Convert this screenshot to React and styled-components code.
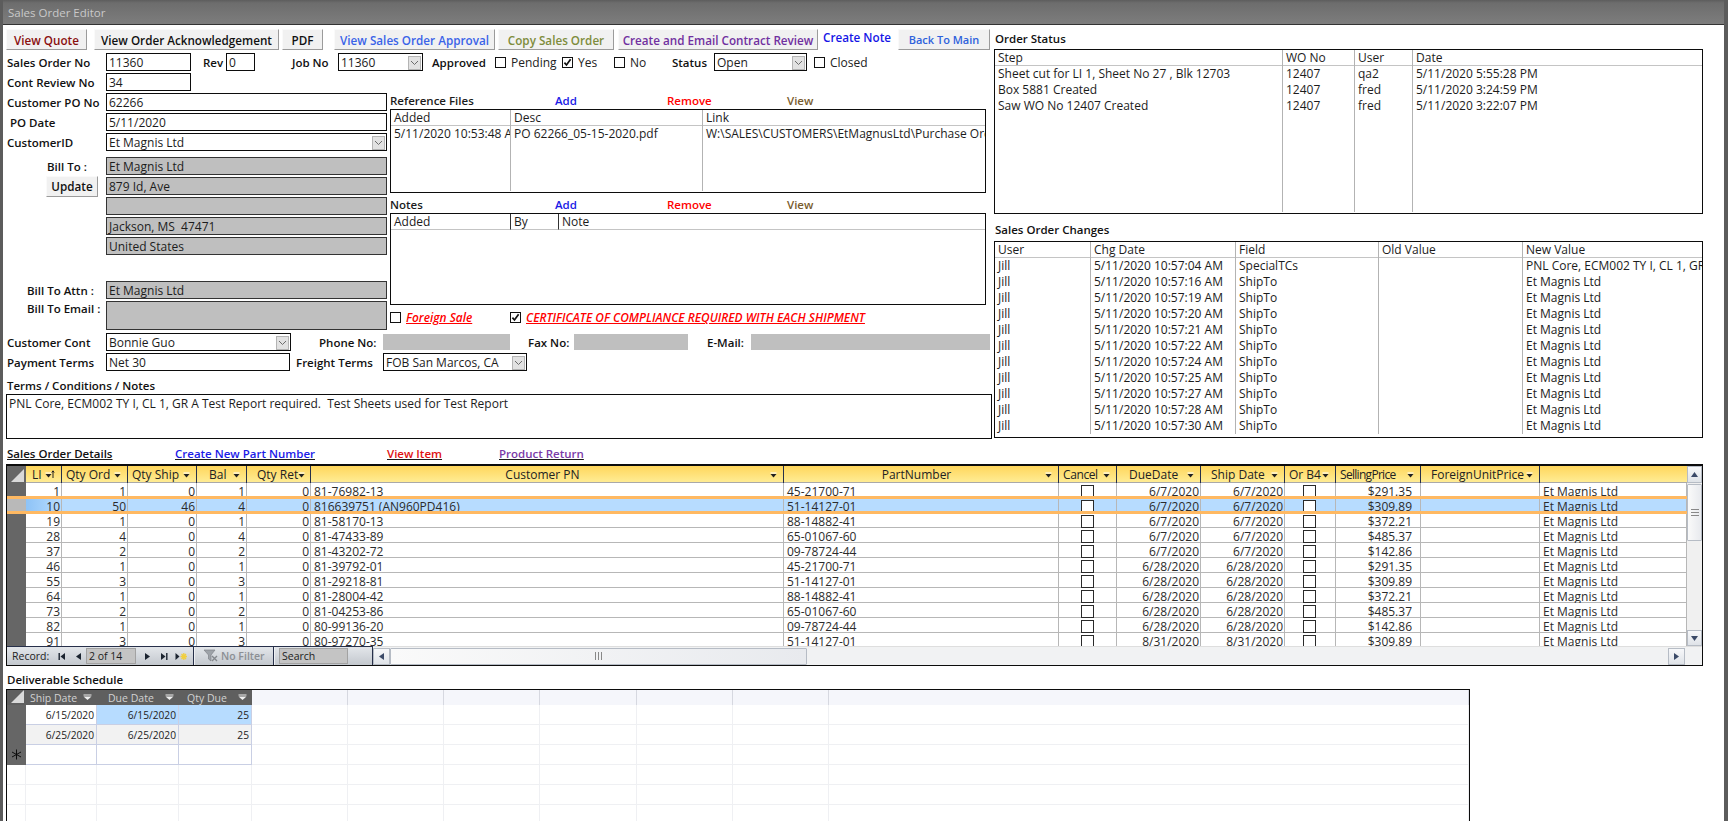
import React from "react";
import styled, { createGlobalStyle } from "styled-components";

const GlobalStyle = createGlobalStyle`
  html, body {
    margin: 0;
    padding: 0;
    background: #fff;
  }
  body {
    font-family: "Open Sans", "Noto Sans", "Liberation Sans", sans-serif;
    font-size: 12px;
    color: #1c1c1c;
  }
  * {
    box-sizing: border-box;
  }
`;

const Page = styled.div`
  width: 1728px;
  height: 821px;
  overflow: hidden;
  display: flex;
  flex-direction: column;
  background: #fff;
  border-left: 3px solid #5c5c5c;
  border-right: 4px solid #5c5c5c;
`;

const TitleBar = styled.div`
  height: 25px;
  flex: none;
  margin: 0 -4px 0 -3px;
  padding: 0 0 0 8px;
  display: flex;
  align-items: center;
  background: linear-gradient(#5d5d5d 0, #6d6d6d 3px, #7d7d7d 100%);
  border-bottom: 1px solid #333;
  color: #c9c9c9;
  font-size: 11.5px;
`;

const Body = styled.div`
  flex: 1;
  min-height: 0;
  padding: 4px 0 0 3px;
  display: flex;
  flex-direction: column;
`;

const TopArea = styled.div`
  display: flex;
  gap: 2px;
  height: 417px;
  flex: none;
`;

const LeftPane = styled.div`
  width: 986px;
  flex: none;
  display: flex;
  flex-direction: column;
`;

const RightPane = styled.div`
  width: 709px;
  flex: none;
  display: flex;
  flex-direction: column;
`;

const Toolbar = styled.div`
  display: flex;
  height: 21px;
  margin-bottom: 3px;
`;

const ActionButton = styled.div`
  width: ${(p) => p.$w}px;
  margin-left: ${(p) => p.$ml || 0}px;
  height: 21px;
  display: flex;
  align-items: center;
  justify-content: center;
  background: #f1f1f1;
  border-right: 1px solid #9b9b9b;
  border-bottom: 1px solid #9b9b9b;
  border-top: 1px solid #fafafa;
  border-left: 1px solid #fafafa;
  color: ${(p) => p.$color || "#111"};
  font-weight: 600;
  font-size: ${(p) => p.$size || 11.7}px;
  white-space: nowrap;
`;

const NoteLink = styled.div`
  width: 75px;
  margin-left: 5px;
  padding-bottom: 5px;
  display: flex;
  align-items: center;
  color: #1616e6;
  font-weight: 600;
  font-size: 11.7px;
  white-space: nowrap;
`;

const Row = styled.div`
  display: flex;
  align-items: center;
  height: 18px;
  margin-bottom: ${(p) => p.$mb ?? 2}px;
  margin-top: ${(p) => p.$mt || 0}px;
`;

const TallRow = styled(Row)`
  height: 29px;
  align-items: flex-start;
`;

const Label = styled.div`
  width: ${(p) => p.$w}px;
  margin-left: ${(p) => p.$ml || 0}px;
  padding-left: ${(p) => p.$pl ?? 1}px;
  flex: none;
  color: #111;
  font-weight: 600;
  font-size: 11.5px;
  white-space: nowrap;
`;

const TextBox = styled.div`
  width: ${(p) => p.$w}px;
  height: ${(p) => p.$h || 18}px;
  flex: none;
  padding: 1px 0 0 2px;
  line-height: 15px;
  background: ${(p) => (p.$gray ? "#bfbfbf" : "#fff")};
  border: 1px solid ${(p) => (p.$gray ? "#333" : "#0c0c0c")};
  white-space: nowrap;
  overflow: hidden;
`;

const BlankField = styled.div`
  width: ${(p) => p.$w}px;
  height: 16px;
  flex: none;
  background: #bfbfbf;
`;

const ComboFrame = styled(TextBox)`
  display: flex;
  justify-content: space-between;
  padding-right: 1px;
`;

const ComboArrow = styled.span`
  width: 13px;
  height: 14px;
  margin-top: 1px;
  flex: none;
  display: flex;
  align-items: center;
  justify-content: center;
  background: #e2e2e2;
  border: 1px solid #b4b4b4;
`;

const CheckOption = styled.div`
  width: ${(p) => p.$w}px;
  margin-left: ${(p) => p.$ml || 0}px;
  flex: none;
  display: flex;
  align-items: center;
  gap: 5px;
  color: #222;
  white-space: nowrap;
`;

const Tick = styled.span`
  width: 11px;
  height: 11px;
  flex: none;
  display: flex;
  background: #fff;
  border: 1px solid #111;
`;

const Columns = styled.div`
  display: flex;
  gap: 3px;
  height: 260px;
`;

const FormCol = styled.div`
  width: 381px;
  flex: none;
`;

const FilesCol = styled.div`
  width: 596px;
  flex: none;
  padding-top: 20px;
`;

const BillSpacer = styled.div`
  height: 4px;
`;

const UpdateButton = styled(ActionButton)`
  margin: 0 8px 0 40px;
  flex: none;
`;

const ListHeading = styled.div`
  display: grid;
  grid-template-columns: 165px 112px 120px 1fr;
  height: 16px;
  line-height: 16px;
  font-weight: 600;
  font-size: 11.5px;
`;

const ListLink = styled.span`
  color: ${(p) => p.$color};
`;

const ListBox = styled.div`
  display: grid;
  grid-template-columns: ${(p) => p.$cols};
  height: ${(p) => p.$h}px;
  margin-bottom: ${(p) => p.$mb || 0}px;
  border: 1px solid #0c0c0c;
  overflow: hidden;
`;

const ListColumn = styled.div`
  min-width: 0;
  display: flex;
  flex-direction: column;
  margin-bottom: 1px;
  border-right: ${(p) => (p.$last || !p.$lines ? "none" : "1px solid #b3b3b3")};
`;

const ListHead = styled.div`
  height: 16px;
  flex: none;
  padding-left: 3px;
  line-height: 15px;
  border-bottom: 1px solid #c4c4c4;
  border-right: ${(p) => (p.$dark ? "1px solid #333" : "none")};
  white-space: nowrap;
`;

const ListCell = styled.div`
  height: 16px;
  flex: none;
  padding-left: 3px;
  line-height: 16px;
  white-space: nowrap;
  overflow: hidden;
`;

const ListScroll = styled.div`
  width: 15px;
  margin-left: -15px;
  display: flex;
  flex-direction: column;
  align-items: center;
  justify-content: space-between;
  background: #f0f0f0;
  z-index: 1;
`;

const ListThumb = styled.div`
  width: 15px;
  height: 17px;
  margin-top: 1px;
  background: #cdcdcd;
`;

const ScrollCap = styled.div`
  height: 16px;
  display: flex;
  align-items: center;
  justify-content: center;
`;

const WarnRow = styled.div`
  display: flex;
  align-items: center;
  height: 16px;
  margin-top: 4px;
`;

const WarnText = styled.span`
  color: #f00;
  font-weight: 600;
  font-size: 11.9px;
  font-style: italic;
  text-decoration: underline;
`;

const SectionLabel = styled.div`
  height: ${(p) => p.$h || 16}px;
  margin-top: ${(p) => p.$mt || 0}px;
  margin-bottom: ${(p) => p.$mb || 0}px;
  line-height: ${(p) => p.$h || 16}px;
  padding-left: 1px;
  color: #111;
  font-weight: 600;
  font-size: 11.5px;
  white-space: nowrap;
`;

const LinkBar = styled.div`
  display: grid;
  grid-template-columns: 169px 212px 112px 1fr;
  height: 16px;
  margin-bottom: 2px;
  line-height: 16px;
  font-weight: 600;
  font-size: 11.5px;
  text-decoration: underline;
`;

const DetailGrid = styled.div`
  width: 1697px;
  height: 202px;
  flex: none;
  display: flex;
  flex-direction: column;
  border: 1px solid #0c0c0c;
  border-top-width: 2px;
`;

const GridMain = styled.div`
  flex: 1;
  min-height: 0;
  display: flex;
`;

const GridRows = styled.div`
  flex: 1;
  min-width: 0;
  overflow: hidden;
`;

const detailColumns = "19px 36px 66px 69px 50px 64px 473px 275px 58px 84px 84px 51px 85px 119px 1fr";

const HeadRow = styled.div`
  display: grid;
  grid-template-columns: ${detailColumns};
  height: 17px;
  border-bottom: 1px solid #a9a9a9;
  background: linear-gradient(#ffd65c, #ffec94);
`;

const CornerCell = styled.div`
  background: ${(p) => p.$bg || "#666"};
  display: flex;
  align-items: flex-end;
  justify-content: flex-end;
  padding: 0 2px 2px 0;
`;

const HeadCell = styled.div`
  min-width: 0;
  display: flex;
  align-items: center;
  padding: 0 6px 1px 4px;
  border-right: 1px solid ${(p) => (p.$last ? "transparent" : "#27304a")};
  color: #222;
  white-space: nowrap;
`;

const HeadText = styled.span`
  flex: 1;
  padding-left: ${(p) => p.$pl || 0}px;
  text-align: ${(p) => p.$align || "left"};
  letter-spacing: ${(p) => p.$tight || 0}px;
`;

const BodyRow = styled.div`
  position: relative;
  display: grid;
  grid-template-columns: ${detailColumns};
  height: 15px;
  border-bottom: 1px solid #b7b7b7;
  background: ${(p) => (p.$selected ? "#b7dcff" : "#fff")};
  &::before,
  &::after {
    content: "";
    display: ${(p) => (p.$selected ? "block" : "none")};
    position: absolute;
    left: 0;
    right: 0;
    height: 3px;
    background: #ffb962;
    z-index: 2;
  }
  &::before {
    top: -2px;
  }
  &::after {
    bottom: -2px;
  }
`;

const Selector = styled.div`
  background: ${(p) => (p.$selected ? "#b9b9b9" : "#666")};
  margin-bottom: -1px;
`;

const Cell = styled.div`
  min-width: 0;
  height: 15px;
  padding: 0 ${(p) => p.$pr ?? 1}px 0 ${(p) => p.$pl ?? 0}px;
  line-height: 18px;
  text-align: ${(p) => p.$align || "left"};
  border-right: 1px solid #b7b7b7;
  color: #2b2b2b;
  white-space: nowrap;
  background: ${(p) => (p.$active ? "linear-gradient(90deg, #8ec3f6, #b7dcff)" : "transparent")};
`;

const CheckCell = styled(Cell)`
  display: flex;
  justify-content: center;
  padding-top: 2px;
`;

const GridCheck = styled.span`
  width: 13px;
  height: 13px;
  background: #fff;
  border: 1px solid #2a2a2a;
`;

const VScroll = styled.div`
  width: 15px;
  flex: none;
  display: flex;
  flex-direction: column;
  background: #f0f0f0;
`;

const ScrollButton = styled.div`
  flex: none;
  width: ${(p) => p.$w || 15}px;
  height: ${(p) => p.$h || 15}px;
  display: flex;
  align-items: center;
  justify-content: center;
  background: linear-gradient(#f7f8fa, #dfe3e8);
  border: 1px solid #b6bcc5;
`;

const ScrollThumb = styled.div`
  flex: none;
  width: ${(p) => p.$w || 15}px;
  height: ${(p) => p.$h || 15}px;
  display: flex;
  align-items: center;
  justify-content: center;
  margin-top: ${(p) => p.$mt || 0}px;
  background: linear-gradient(90deg, #fafafa, #e8eaee);
  border: 1px solid #b6bcc5;
  border-radius: 1px;
`;

const ScrollGap = styled.div`
  flex: 1;
`;

const GripV = styled.span`
  width: 8px;
  height: 7px;
  border-top: 1px solid #888;
  border-bottom: 1px solid #888;
  background: linear-gradient(#888, #888) center / 100% 1px no-repeat;
`;

const GripH = styled.span`
  width: 7px;
  height: 8px;
  border-left: 1px solid #888;
  border-right: 1px solid #888;
  background: linear-gradient(#888, #888) center / 1px 100% no-repeat;
`;

const NavRow = styled.div`
  height: 19px;
  flex: none;
  display: flex;
`;

const NavBar = styled.div`
  width: 366px;
  flex: none;
  display: flex;
  align-items: center;
  padding-left: 5px;
  background: linear-gradient(#e3e6ea, #c3c8ce);
  border-top: 1px solid #27304a;
  border-right: 1px solid #27304a;
  color: #222;
  font-size: 10.5px;
`;

const NavLabel = styled.span`
  width: 46px;
  flex: none;
`;

const NavIcon = styled.span`
  margin-left: ${(p) => p.$ml || 0}px;
  display: flex;
  flex: none;
`;

const RecordBox = styled.div`
  width: ${(p) => p.$w}px;
  margin-left: ${(p) => p.$ml || 0}px;
  height: 16px;
  flex: none;
  padding-left: 2px;
  line-height: 14px;
  background: #c4c4c4;
  border: 1px solid #a2a2a2;
  color: #1c1c1c;
`;

const FilterText = styled.span`
  width: 42px;
  margin-left: 2px;
  flex: none;
  color: #8b8f94;
  font-weight: 600;
  white-space: nowrap;
`;

const NavDivider = styled.span`
  width: 1px;
  height: 18px;
  flex: none;
  margin-left: ${(p) => p.$ml || 0}px;
  background: #27304a;
  box-shadow: 1px 0 0 #eef0f3;
`;

const HScroll = styled.div`
  flex: 1;
  min-width: 0;
  display: flex;
  align-items: center;
  padding-right: 17px;
  background: #f1f2f3;
  border-top: 1px solid #dedede;
`;

const ScheduleSection = styled.div`
  flex: 1;
  min-height: 0;
  margin-top: 6px;
  display: flex;
  flex-direction: column;
`;

const Sheet = styled.div`
  width: 1464px;
  flex: 1;
  min-height: 0;
  margin-top: 1px;
  overflow: hidden;
  border-left: 1px solid #0c0c0c;
  border-right: 1px solid #0c0c0c;
  border-top: 1px solid #0c0c0c;
  display: grid;
  grid-template-columns: 19px 71px 82px 73px repeat(6, 96.15px) 1fr;
  grid-auto-rows: 20px;
  grid-template-rows: 15px;
`;

const SheetHead = styled.div`
  display: flex;
  align-items: center;
  padding: 0 4px 0 4px;
  background: #5f5f5f;
  color: #d2d2d2;
  font-size: 10.5px;
  white-space: nowrap;
`;

const SheetHeadBlank = styled.div`
  background: #f5f6fb;
  border-right: 1px solid #d6d8e0;
`;

const SheetCell = styled.div`
  padding-right: 2px;
  line-height: 20px;
  text-align: right;
  color: #222;
  font-size: 10.2px;
  background: ${(p) => p.$bg || "#fff"};
  border-right: 1px solid ${(p) => (p.$filled ? "#c9cfe4" : "#eff0f3")};
  border-bottom: 1px solid ${(p) => (p.$filled ? "#c9cfe4" : "#eff0f3")};
`;

const SheetSelector = styled.div`
  display: flex;
  align-items: center;
  justify-content: center;
  background: ${(p) => (p.$filled ? "#666" : "#fff")};
  border-right: 1px solid ${(p) => (p.$filled ? "#666" : "#eff0f3")};
  border-bottom: 1px solid ${(p) => (p.$filled ? "#666" : "#eff0f3")};
`;

// little drawings
const CheckMark = () => (
  <svg width="9" height="9" viewBox="0 0 9 9">
    <path d="M1.4 4.6 L3.5 7 L7.6 1.3" fill="none" stroke="#111" strokeWidth="1.7" />
  </svg>
);

const Chevron = () => (
  <svg width="9" height="6" viewBox="0 0 9 6">
    <path d="M1 1 L4.5 4.5 L8 1" fill="none" stroke="#6c6c6c" strokeWidth="1" />
  </svg>
);

const Caret = ({ up, color = "#666" }) => (
  <svg width="9" height="6" viewBox="0 0 9 6">
    <path d={up ? "M1 5 L4.5 1 L8 5" : "M1 1 L4.5 5 L8 1"} fill="none" stroke={color} strokeWidth="1.6" />
  </svg>
);

const Tri = ({ dir = "down", color = "#3b4a68", size = 9 }) => {
  const points = {
    down: "1,2 8,2 4.5,7",
    up: "1,7 8,7 4.5,2",
    left: "7,1 7,8 2,4.5",
    right: "2,1 2,8 7,4.5",
  };
  return (
    <svg width={size} height={size} viewBox="0 0 9 9">
      <polygon points={points[dir]} fill={color} />
    </svg>
  );
};

const SortArrow = ({ sorted }) => (
  <svg width={sorted ? 10 : 7} height="9" viewBox={sorted ? "0 0 10 9" : "0 0 7 9"} style={{ flex: "none" }}>
    <rect x="0.5" y="2.5" width="6" height="1" fill="#fff" />
    <polygon points="0.5,4 6.5,4 3.5,7.5" fill="#222" />
    {sorted && <path d="M8 8 V1 M6.8 2.5 L8 0.8 L9.2 2.5" stroke="#222" strokeWidth="1" fill="none" />}
  </svg>
);

const SheetArrow = () => (
  <svg width="10" height="7" viewBox="0 0 10 7" style={{ flex: "none" }}>
    <rect x="0.5" y="0.5" width="8" height="1" fill="#f0f0f0" />
    <polygon points="0.5,2.5 8.5,2.5 4.5,6" fill="#f0f0f0" />
  </svg>
);

const CornerMark = () => (
  <svg width="13" height="13" viewBox="0 0 13 13">
    <polygon points="13,0 13,13 0,13" fill="#d9d9d9" />
  </svg>
);

const FirstIcon = () => (
  <svg width="8" height="9" viewBox="0 0 8 9">
    <rect x="0.5" y="1" width="1.4" height="7" fill="#1b2430" />
    <polygon points="7,1 7,8 2.5,4.5" fill="#1b2430" />
  </svg>
);

const LastIcon = () => (
  <svg width="8" height="9" viewBox="0 0 8 9">
    <rect x="6.1" y="1" width="1.4" height="7" fill="#1b2430" />
    <polygon points="1,1 1,8 5.5,4.5" fill="#1b2430" />
  </svg>
);

const NewIcon = () => (
  <svg width="13" height="9" viewBox="0 0 13 9">
    <polygon points="0.5,1 0.5,8 4.5,4.5" fill="#1b2430" />
    <path d="M8.8 1 V8 M5.5 4.5 H12 M6.5 2 L11 7 M11 2 L6.5 7" stroke="#f1cf3f" strokeWidth="1.3" />
  </svg>
);

const FilterIcon = () => (
  <svg width="16" height="14" viewBox="0 0 16 14">
    <path d="M1 1 H12 L8 6 V12 L5.5 10 V6 Z" fill="#9ea3a9" stroke="#7f8388" strokeWidth="0.7" />
    <path d="M9 7 L14 12 M14 7 L9 12" stroke="#84888d" strokeWidth="1.4" />
  </svg>
);

const StarMark = () => (
  <svg width="11" height="11" viewBox="0 0 11 11">
    <path d="M5.5 0.5 V10.5 M1 3 L10 8 M10 3 L1 8" stroke="#0c0c0c" strokeWidth="1" />
  </svg>
);

const Combo = ({ w, value }) => (
  <ComboFrame $w={w}>
    {value}
    <ComboArrow>
      <Chevron />
    </ComboArrow>
  </ComboFrame>
);

const Check = ({ w, ml, children, checked }) => (
  <CheckOption $w={w} $ml={ml}>
    <Tick>{checked && <CheckMark />}</Tick>
    {children}
  </CheckOption>
);

const List = ({ cols, h, mb, columns, scroll }) => (
  <ListBox $cols={cols} $h={h} $mb={mb}>
    {columns.map((col, i) => (
      <ListColumn key={col.head} $lines={col.lines !== false} $last={i === columns.length - 1}>
        <ListHead $dark={col.dark}>{col.head}</ListHead>
        {(col.cells || []).map((text, j) => (
          <ListCell key={j}>{text}</ListCell>
        ))}
      </ListColumn>
    ))}
    {scroll && (
      <ListScroll>
        <div>
          <ScrollCap>
            <Caret up />
          </ScrollCap>
          <ListThumb />
        </div>
        <ScrollCap>
          <Caret />
        </ScrollCap>
      </ListScroll>
    )}
  </ListBox>
);

const orderStatus = [
  { head: "Step", cells: ["Sheet cut for LI 1, Sheet No 27 , Blk 12703", "Box 5881 Created", "Saw WO No 12407 Created"] },
  { head: "WO No", cells: ["12407", "12407", "12407"] },
  { head: "User", cells: ["qa2", "fred", "fred"] },
  { head: "Date", cells: ["5/11/2020 5:55:28 PM", "5/11/2020 3:24:59 PM", "5/11/2020 3:22:07 PM"] },
];

const changeTimes = ["04", "16", "19", "20", "21", "22", "24", "25", "27", "28", "30"];

const orderChanges = [
  { head: "User", cells: changeTimes.map(() => "Jill") },
  { head: "Chg Date", cells: changeTimes.map((s) => `5/11/2020 10:57:${s} AM`) },
  { head: "Field", cells: changeTimes.map((s, i) => (i === 0 ? "SpecialTCs" : "ShipTo")) },
  { head: "Old Value", cells: [] },
  {
    head: "New Value",
    cells: changeTimes.map((s, i) => (i === 0 ? "PNL Core, ECM002 TY I, CL 1, GR A Test" : "Et Magnis Ltd")),
  },
];

const referenceFiles = [
  { head: "Added", cells: ["5/11/2020 10:53:48 AM"] },
  { head: "Desc", cells: ["PO 62266_05-15-2020.pdf"] },
  { head: "Link", cells: ["W:\\SALES\\CUSTOMERS\\EtMagnusLtd\\Purchase Orders\\PO 62266"] },
];

const notes = [
  { head: "Added", lines: false, dark: true },
  { head: "By", lines: false, dark: true },
  { head: "Note", lines: false },
];

const detailHeads = [
  { label: "LI", sorted: true, pl: 2 },
  { label: "Qty Ord" },
  { label: "Qty Ship" },
  { label: "Bal", pl: 8 },
  { label: "Qty Ret", pl: 6 },
  { label: "Customer PN", align: "center" },
  { label: "PartNumber", align: "center" },
  { label: "Cancel", tight: -0.4 },
  { label: "DueDate", pl: 8 },
  { label: "Ship Date", pl: 6 },
  { label: "Or B4" },
  { label: "SellingPrice", tight: -0.7 },
  { label: "ForeignUnitPrice", pl: 6 },
];

const detailRows = [
  [1, 1, 0, 1, 0, "81-76982-13", "45-21700-71", "6/7/2020", "$291.35"],
  [10, 50, 46, 4, 0, "816639751 (AN960PD416)", "51-14127-01", "6/7/2020", "$309.89"],
  [19, 1, 0, 1, 0, "81-58170-13", "88-14882-41", "6/7/2020", "$372.21"],
  [28, 4, 0, 4, 0, "81-47433-89", "65-01067-60", "6/7/2020", "$485.37"],
  [37, 2, 0, 2, 0, "81-43202-72", "09-78724-44", "6/7/2020", "$142.86"],
  [46, 1, 0, 1, 0, "81-39792-01", "45-21700-71", "6/28/2020", "$291.35"],
  [55, 3, 0, 3, 0, "81-29218-81", "51-14127-01", "6/28/2020", "$309.89"],
  [64, 1, 0, 1, 0, "81-28004-42", "88-14882-41", "6/28/2020", "$372.21"],
  [73, 2, 0, 2, 0, "81-04253-86", "65-01067-60", "6/28/2020", "$485.37"],
  [82, 1, 0, 1, 0, "80-99136-20", "09-78724-44", "6/28/2020", "$142.86"],
  [91, 3, 0, 3, 0, "80-97270-35", "51-14127-01", "8/31/2020", "$309.89"],
];

const scheduleHeads = [
  { label: "Ship Date", pl: 0 },
  { label: "Due Date", pl: 7 },
  { label: "Qty Due", pl: 4 },
];

const scheduleRows = [
  { ship: "6/15/2020", due: "6/15/2020", qty: "25", bg: ["#fff", "#b7dcff", "#b7dcff"] },
  { ship: "6/25/2020", due: "6/25/2020", qty: "25", bg: ["#f2f2f2", "#f2f2f2", "#f2f2f2"] },
  { ship: "", due: "", qty: "", star: true, bg: ["#fff", "#fff", "#fff"] },
];

const DetailsGrid = () => (
  <DetailGrid>
    <GridMain>
      <GridRows>
        <HeadRow>
          <CornerCell>
            <CornerMark />
          </CornerCell>
          {detailHeads.map((h) => (
            <HeadCell key={h.label}>
              <HeadText $align={h.align} $pl={h.pl} $tight={h.tight}>
                {h.label}
              </HeadText>
              <SortArrow sorted={h.sorted} />
            </HeadCell>
          ))}
          <HeadCell $last />
        </HeadRow>
        {detailRows.map((r, i) => (
          <BodyRow key={r[0]} $selected={i === 1}>
            <Selector $selected={i === 1} />
            {r.slice(0, 5).map((v, j) => (
              <Cell key={j} $align="right" $active={i === 1 && j === 0}>
                {v}
              </Cell>
            ))}
            <Cell $pl={3}>{r[5]}</Cell>
            <Cell $pl={3}>{r[6]}</Cell>
            <CheckCell>
              <GridCheck />
            </CheckCell>
            <Cell $align="right">{r[7]}</Cell>
            <Cell $align="right">{r[7]}</Cell>
            <CheckCell>
              <GridCheck />
            </CheckCell>
            <Cell $align="right" $pr={8}>
              {r[8]}
            </Cell>
            <Cell />
            <Cell $pl={3}>Et Magnis Ltd</Cell>
          </BodyRow>
        ))}
      </GridRows>
      <VScroll>
        <ScrollButton $h={17}>
          <Tri dir="up" />
        </ScrollButton>
        <ScrollThumb $h={57} $mt={1}>
          <GripV />
        </ScrollThumb>
        <ScrollGap />
        <ScrollButton $h={16}>
          <Tri dir="down" />
        </ScrollButton>
      </VScroll>
    </GridMain>
    <NavRow>
      <NavBar>
        <NavLabel>Record:</NavLabel>
        <NavIcon>
          <FirstIcon />
        </NavIcon>
        <NavIcon $ml={8}>
          <Tri dir="left" color="#1b2430" />
        </NavIcon>
        <RecordBox $w={50} $ml={3}>
          2 of 14
        </RecordBox>
        <NavIcon $ml={7}>
          <Tri dir="right" color="#1b2430" />
        </NavIcon>
        <NavIcon $ml={8}>
          <LastIcon />
        </NavIcon>
        <NavIcon $ml={7}>
          <NewIcon />
        </NavIcon>
        <NavDivider $ml={5} />
        <NavIcon $ml={9}>
          <FilterIcon />
        </NavIcon>
        <FilterText>No Filter</FilterText>
        <NavDivider $ml={10} />
        <RecordBox $w={69} $ml={5}>
          Search
        </RecordBox>
      </NavBar>
      <HScroll>
        <ScrollButton $w={17} $h={17}>
          <Tri dir="left" />
        </ScrollButton>
        <ScrollThumb $w={417} $h={17}>
          <GripH />
        </ScrollThumb>
        <ScrollGap />
        <ScrollButton $w={17} $h={17}>
          <Tri dir="right" />
        </ScrollButton>
      </HScroll>
    </NavRow>
  </DetailGrid>
);

const ScheduleSheet = () => (
  <Sheet>
    <CornerCell $bg="#5f5f5f">
      <CornerMark />
    </CornerCell>
    {scheduleHeads.map((h) => (
      <SheetHead key={h.label}>
        <HeadText $pl={h.pl}>{h.label}</HeadText>
        <SheetArrow />
      </SheetHead>
    ))}
    {Array.from({ length: 7 }, (_, i) => (
      <SheetHeadBlank key={i} />
    ))}
    {[0, 1, 2, 3, 4, 5].map((n) => {
      const row = scheduleRows[n];
      return (
        <React.Fragment key={n}>
          <SheetSelector $filled={!!row}>{row && row.star && <StarMark />}</SheetSelector>
          <SheetCell $filled={!!row} $bg={row && row.bg[0]}>
            {row && row.ship}
          </SheetCell>
          <SheetCell $filled={!!row} $bg={row && row.bg[1]}>
            {row && row.due}
          </SheetCell>
          <SheetCell $filled={!!row} $bg={row && row.bg[2]}>
            {row && row.qty}
          </SheetCell>
          {Array.from({ length: 7 }, (_, i) => (
            <SheetCell key={i} />
          ))}
        </React.Fragment>
      );
    })}
  </Sheet>
);

const App = () => {
  return (
    <Page>
      <GlobalStyle />
      <TitleBar>Sales Order Editor</TitleBar>
      <Body>
        <TopArea>
          <LeftPane>
            <Toolbar>
              <ActionButton $w={81} $color="#8a0f0f">
                View Quote
              </ActionButton>
              <ActionButton $w={185} $ml={7}>
                View Order Acknowledgement
              </ActionButton>
              <ActionButton $w={41} $ml={3}>
                PDF
              </ActionButton>
              <ActionButton $w={161} $ml={11} $color="#3a63e8">
                View Sales Order Approval
              </ActionButton>
              <ActionButton $w={116} $ml={3} $color="#7e8c3c">
                Copy Sales Order
              </ActionButton>
              <ActionButton $w={200} $ml={4} $color="#7030a0">
                Create and Email Contract Review
              </ActionButton>
              <NoteLink>Create Note</NoteLink>
              <ActionButton $w={92} $color="#2f62dc" $size={11}>
                Back To Main
              </ActionButton>
            </Toolbar>
            <Row>
              <Label $w={100}>Sales Order No</Label>
              <TextBox $w={85}>11360</TextBox>
              <Label $w={24} $ml={11}>
                Rev
              </Label>
              <TextBox $w={29}>0</TextBox>
              <Label $w={47} $ml={36}>
                Job No
              </Label>
              <Combo w={85} value="11360" />
              <Label $w={64} $ml={8}>
                Approved
              </Label>
              <Check w={67}>Pending</Check>
              <Check w={52} checked>
                Yes
              </Check>
              <Check w={58}>No</Check>
              <Label $w={42} $pl={0}>
                Status
              </Label>
              <Combo w={93} value="Open" />
              <Check w={70} ml={7}>
                Closed
              </Check>
            </Row>
            <Columns>
              <FormCol>
                <Row>
                  <Label $w={100}>Cont Review No</Label>
                  <TextBox $w={85}>34</TextBox>
                </Row>
                <Row>
                  <Label $w={100}>Customer PO No</Label>
                  <TextBox $w={281}>62266</TextBox>
                </Row>
                <Row>
                  <Label $w={100} $pl={4}>
                    PO Date
                  </Label>
                  <TextBox $w={281}>5/11/2020</TextBox>
                </Row>
                <Row>
                  <Label $w={100}>CustomerID</Label>
                  <Combo w={281} value="Et Magnis Ltd" />
                </Row>
                <BillSpacer />
                <Row>
                  <Label $w={100} $pl={41}>
                    Bill To :
                  </Label>
                  <TextBox $w={281} $gray>
                    Et Magnis Ltd
                  </TextBox>
                </Row>
                <Row>
                  <UpdateButton $w={52}>Update</UpdateButton>
                  <TextBox $w={281} $gray>
                    879 Id, Ave
                  </TextBox>
                </Row>
                <Row>
                  <Label $w={100} />
                  <TextBox $w={281} $gray />
                </Row>
                <Row>
                  <Label $w={100} />
                  <TextBox $w={281} $gray>
                    Jackson, MS&nbsp;&nbsp;47471
                  </TextBox>
                </Row>
                <Row $mb={26}>
                  <Label $w={100} />
                  <TextBox $w={281} $gray>
                    United States
                  </TextBox>
                </Row>
                <Row>
                  <Label $w={100} $pl={21}>
                    Bill To Attn :
                  </Label>
                  <TextBox $w={281} $gray>
                    Et Magnis Ltd
                  </TextBox>
                </Row>
                <TallRow $mb={0}>
                  <Label $w={100} $pl={21}>
                    Bill To Email :
                  </Label>
                  <TextBox $w={281} $h={29} $gray />
                </TallRow>
              </FormCol>
              <FilesCol>
                <ListHeading>
                  <span>Reference Files</span>
                  <ListLink $color="#1a1ae6">Add</ListLink>
                  <ListLink $color="#f00">Remove</ListLink>
                  <ListLink $color="#7a5c2e">View</ListLink>
                </ListHeading>
                <List cols="120px 192px 1fr" h={84} mb={4} columns={referenceFiles} />
                <ListHeading>
                  <span>Notes</span>
                  <ListLink $color="#1a1ae6">Add</ListLink>
                  <ListLink $color="#f00">Remove</ListLink>
                  <ListLink $color="#7a5c2e">View</ListLink>
                </ListHeading>
                <List cols="120px 48px 1fr" h={92} columns={notes} />
                <WarnRow>
                  <Check w={120}>
                    <WarnText>Foreign Sale</WarnText>
                  </Check>
                  <Check w={400} checked>
                    <WarnText>CERTIFICATE OF COMPLIANCE REQUIRED WITH EACH SHIPMENT</WarnText>
                  </Check>
                </WarnRow>
              </FilesCol>
            </Columns>
            <Row>
              <Label $w={100}>Customer Cont</Label>
              <Combo w={185} value="Bonnie Guo" />
              <Label $w={65} $ml={27}>
                Phone No:
              </Label>
              <BlankField $w={127} />
              <Label $w={47} $ml={17}>
                Fax No:
              </Label>
              <BlankField $w={114} />
              <Label $w={45} $ml={18}>
                E-Mail:
              </Label>
              <BlankField $w={239} />
            </Row>
            <Row>
              <Label $w={100}>Payment Terms</Label>
              <TextBox $w={184}>Net 30</TextBox>
              <Label $w={87} $ml={6} $pl={0}>
                Freight Terms
              </Label>
              <Combo w={144} value="FOB San Marcos, CA" />
            </Row>
            <SectionLabel $h={17} $mt={4}>
              Terms / Conditions / Notes
            </SectionLabel>
            <TextBox $w={986} $h={45}>
              PNL Core, ECM002 TY I, CL 1, GR A Test Report required.&nbsp; Test Sheets used for Test Report
            </TextBox>
          </LeftPane>
          <RightPane>
            <SectionLabel $h={20}>Order Status</SectionLabel>
            <List cols="288px 72px 58px 1fr" h={165} columns={orderStatus} />
            <SectionLabel $h={20} $mt={6} $mb={1}>
              Sales Order Changes
            </SectionLabel>
            <List cols="96px 145px 143px 144px 1fr" h={197} columns={orderChanges} scroll />
          </RightPane>
        </TopArea>
        <LinkBar>
          <SectionLabel as="span">Sales Order Details</SectionLabel>
          <ListLink $color="#1a1ae6">Create New Part Number</ListLink>
          <ListLink $color="#e01010">View Item</ListLink>
          <ListLink $color="#7a3aa8">Product Return</ListLink>
        </LinkBar>
        <DetailsGrid />
        <ScheduleSection>
          <SectionLabel>Deliverable Schedule</SectionLabel>
          <ScheduleSheet />
        </ScheduleSection>
      </Body>
    </Page>
  );
};

export default App;
